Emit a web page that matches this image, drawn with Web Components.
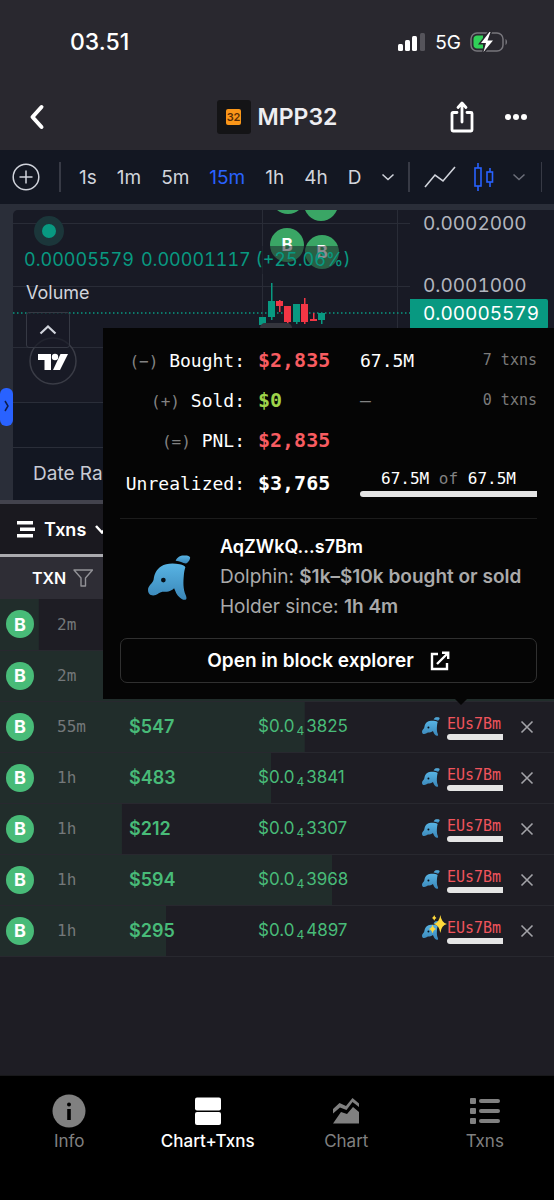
<!DOCTYPE html>
<html lang="en">
<head>
<meta charset="UTF-8">
<meta name="viewport" content="width=device-width, initial-scale=1">
<title>MPP32</title>
<style>
  :root {
    --bg: rgb(30, 29, 36);
    --panel: rgb(19, 23, 34);
    --frame: rgb(42, 46, 57);
    --green: rgb(72, 187, 120);
    --teal: rgb(8, 153, 129);
    --red: rgb(242, 54, 69);
    --blue: rgb(41, 98, 255);
    --mono: "DejaVu Sans Mono", monospace;
  }
  body {
    margin: 0;
    background: var(--bg);
    color: white;
    font-family: Inter, "Liberation Sans", sans-serif;
  }
</style>
</head>
<body>
<app-screen>
  <status-bar></status-bar>
  <token-header>MPP32</token-header>
  <chart-toolbar></chart-toolbar>
  <price-chart></price-chart>
  <txn-list></txn-list>
  <wallet-popover slot="overlay">AqZWkQ...s7Bm</wallet-popover>
  <tab-bar slot="footer"></tab-bar>
</app-screen>

<script>
const dolphin = (width, height) => `
  <svg width="${width}" height="${height}" viewBox="0 0 42 44" role="img" aria-label="Dolphin">
    <defs>
      <linearGradient id="skin" x1="0" y1="0" x2="0" y2="1">
        <stop offset="0" stop-color="#58b4e4"/>
        <stop offset="1" stop-color="#3a86b8"/>
      </linearGradient>
    </defs>
    <path fill="url(#skin)" d="M36.500 12C36 10.500 34 9.500 31 9C23 7.800 17 8.500 13 11C8 14 6 19 5.500 24C4.500 28 0 30 0 34C0 38 2 39.500 5 39.500C9 39.500 10 37 14 36C18 36 22 36 25.500 32.500C27 36 28 39 30.500 41C32 42.500 34 44 36.500 43.800C38 43.500 37.800 41.500 37 39.500C34 33 34.500 26 35 20C35.200 17 35.800 14 36.500 12Z"/>
    <path fill="url(#skin)" d="M27 5.500C29 2 31 .5 35 .5C38 .3 41 .8 41.200 2.500C41 5 39 8 37 8.300C34 7.500 31 6 27 5.500Z"/>
    <circle cx="15" cy="24.500" r="2.300" fill="#071019"/>
  </svg>`;

class AppScreen extends HTMLElement {
  connectedCallback() {
    this.attachShadow({ mode: 'open' });
    this.shadowRoot.innerHTML = `
      <style>
        :host {
          display: flex;
          flex-direction: column;
          min-height: 100vh;
          position: relative;
        }
        main {
          flex: 1;
        }
      </style>
      <main><slot></slot></main>
      <slot name="overlay"></slot>
      <slot name="footer"></slot>
    `;
  }
}
customElements.define('app-screen', AppScreen);

class StatusBar extends HTMLElement {
  connectedCallback() {
    this.attachShadow({ mode: 'open' });
    this.shadowRoot.innerHTML = `
      <style>
        :host {
          display: flex;
          align-items: center;
          justify-content: space-between;
          height: 84px;
          padding: 0 46px 0 70px;
          background: rgb(41, 40, 47);
        }
        .time {
          font-size: 23px;
          font-weight: 500;
        }
        .signals {
          display: flex;
          align-items: center;
          gap: 9px;
          font-size: 19px;
          font-weight: 400;
        }
        svg {
          display: block;
        }
      </style>
      <span class="time">03.51</span>
      <div class="signals">
        <svg width="28" height="18" viewBox="0 0 28 18" fill="white">
          <rect x="0" y="11" width="5" height="7" rx="1.5"/>
          <rect x="7" y="7" width="5" height="11" rx="1.5"/>
          <rect x="14" y="3" width="5" height="15" rx="1.5"/>
          <rect x="22" y="0" width="5" height="18" rx="1.5" fill="#55545b"/>
        </svg>
        <span>5G</span>
        <svg width="38" height="20" viewBox="0 0 38 20">
          <rect x="1" y="1" width="32" height="18" rx="6" fill="none" stroke="#77767c" stroke-width="1.5"/>
          <path d="M35.500 7C37.500 8 37.500 12 35.500 13Z" fill="#77767c"/>
          <path d="M7 3.500H13V16.500H7C5 16.500 3.500 15 3.500 13V7C3.500 5 5 3.500 7 3.500Z" fill="#30d158"/>
          <path d="M19.500 0L11 11H16L13.500 20L23 8.500H17.500L20.500 0Z" fill="white" stroke="#29282f" stroke-width="3" paint-order="stroke"/>
        </svg>
      </div>
    `;
  }
}
customElements.define('status-bar', StatusBar);

class TokenHeader extends HTMLElement {
  connectedCallback() {
    this.attachShadow({ mode: 'open' });
    this.shadowRoot.innerHTML = `
      <style>
        :host {
          display: grid;
          grid-template-columns: 1fr auto 1fr;
          align-items: center;
          height: 66px;
          padding: 0 26px;
          background: rgb(41, 40, 47);
        }
        button {
          display: flex;
          padding: 0;
          border: 0;
          background: none;
          color: white;
        }
        h1 {
          display: flex;
          align-items: center;
          gap: 7px;
          margin: 0;
          font-size: 23px;
          font-weight: 600;
          color: rgb(238, 238, 242);
        }
        .logo {
          display: grid;
          place-items: center;
          width: 34px;
          height: 34px;
          border-radius: 3px;
          background: rgb(20, 20, 22);
        }
        .logo span {
          padding: 0 1px;
          border-radius: 2px;
          background: rgb(250, 150, 25);
          color: rgb(90, 45, 5);
          font-size: 11px;
          line-height: 16px;
        }
        .actions {
          display: flex;
          align-items: center;
          justify-content: flex-end;
          gap: 29px;
        }
      </style>
      <button aria-label="Back">
        <svg width="22" height="26" viewBox="0 0 22 26" fill="none" stroke="white" stroke-width="4" stroke-linecap="round" stroke-linejoin="round"><path d="M14 3L5 13L14 23" transform="translate(1.500)"/></svg>
      </button>
      <h1><span class="logo"><span>32</span></span><slot></slot></h1>
      <div class="actions">
        <button aria-label="Share">
          <svg width="26" height="34" viewBox="0 0 26 34" fill="none" stroke="white" stroke-width="2.800" stroke-linecap="round" stroke-linejoin="round">
            <path d="M8 12.500H4Q3 12.500 3 13.500V30Q3 31 4 31H22Q23 31 23 30V13.500Q23 12.500 22 12.500H18"/>
            <path d="M13 22V4M9 7.500L13 3L17 7.500"/>
          </svg>
        </button>
        <button aria-label="More">
          <svg width="24" height="8" viewBox="0 0 24 8" fill="white"><circle cx="4" cy="4" r="3"/><circle cx="12" cy="4" r="3"/><circle cx="20" cy="4" r="3"/></svg>
        </button>
      </div>
    `;
  }
}
customElements.define('token-header', TokenHeader);

class ChartToolbar extends HTMLElement {
  connectedCallback() {
    const intervals = ['1s', '1m', '5m', '15m', '1h', '4h', 'D'];
    this.attachShadow({ mode: 'open' });
    this.shadowRoot.innerHTML = `
      <style>
        :host {
          display: flex;
          align-items: center;
          height: 54px;
          padding: 0 12px;
          background: var(--panel);
          border-bottom: 6px solid var(--frame);
          box-sizing: content-box;
        }
        button {
          display: flex;
          padding: 0;
          border: 0;
          background: none;
          color: rgb(209, 212, 220);
          font: 400 19px Inter, sans-serif;
        }
        button.active {
          color: var(--blue);
        }
        .intervals {
          display: flex;
          align-items: center;
          gap: 20px;
          padding: 0 13px 0 18px;
        }
        .styles {
          display: flex;
          align-items: center;
          flex: 1;
          gap: 18px;
          padding: 0 14px;
        }
        i {
          width: 2px;
          height: 30px;
          background: rgb(55, 58, 69);
        }
        .add {
          margin-right: 19px;
        }
        .end {
          width: 1px;
        }
      </style>
      <button class="add" aria-label="Indicators">
        <svg width="28" height="28" viewBox="0 0 28 28" fill="none" stroke="#d1d4dc" stroke-width="1.500"><circle cx="14" cy="14" r="12.800"/><path d="M14 7.500V20.500M7.500 14H20.500"/></svg>
      </button>
      <i></i>
      <div class="intervals">
        ${intervals.map(t => `<button${t === '15m' ? ' class="active"' : ''}>${t}</button>`).join('')}
        <button aria-label="More intervals">
          <svg width="14" height="8" viewBox="0 0 14 8" fill="none" stroke="#d1d4dc" stroke-width="1.500"><path d="M1.500 1.500L7 6.500L12.500 1.500"/></svg>
        </button>
      </div>
      <i></i>
      <div class="styles">
        <button aria-label="Line">
          <svg width="32" height="24" viewBox="0 0 32 24" fill="none" stroke="#d1d4dc" stroke-width="1.600"><path d="M1 22L11 10L19 16L31 2"/></svg>
        </button>
        <button aria-label="Candles">
          <svg width="20" height="28" viewBox="0 0 20 28" fill="none" stroke="#2962ff" stroke-width="1.600"><rect x="1" y="5" width="6" height="18"/><path d="M4 0V5M4 23V28"/><rect x="13" y="9" width="5.500" height="10"/><path d="M16 5V9M16 19V24"/></svg>
        </button>
        <button aria-label="More styles">
          <svg width="14" height="8" viewBox="0 0 14 8" fill="none" stroke="#6c6f7a" stroke-width="1.500"><path d="M1.500 1.500L7 6.500L12.500 1.500"/></svg>
        </button>
      </div>
      <i class="end"></i>
    `;
  }
}
customElements.define('chart-toolbar', ChartToolbar);

class PriceChart extends HTMLElement {
  connectedCallback() {
    // x, top, height, wick top, wick bottom, up
    const candles = [
      [246, 107, 8, 107, 115, 1],
      [255, 91, 16, 73, 110, 1],
      [263, 91, 5, 90, 102, 0],
      [271, 96, 16, 96, 114, 0],
      [280, 94, 18, 94, 114, 1],
      [288, 94, 18, 88, 114, 0],
      [297, 109, 2, 103, 111, 0],
      [305, 103, 7, 103, 114, 1]
    ];
    // the first two are scrolled out at the top, only their lower edge shows
    const buys = [[275, -13], [308, -6], [274, 35, 'B'], [309, 42, 'B']];
    this.attachShadow({ mode: 'open' });
    this.shadowRoot.innerHTML = `
      <style>
        :host {
          display: flex;
          background: var(--frame);
          border-bottom: 4px solid rgb(67, 67, 77);
          font-variant-numeric: tabular-nums;
        }
        .rail {
          display: flex;
          align-items: center;
          width: 13px;
          padding-top: 104px;
        }
        .rail button {
          width: 13px;
          height: 38px;
          padding: 0;
          border: 0;
          border-radius: 6px;
          background: var(--blue);
        }
        .chart {
          flex: 1;
          min-width: 0;
          background: rgb(24, 26, 37);
          border-top-left-radius: 5px;
          overflow: hidden;
        }
        .plot {
          display: grid;
          grid-template-columns: 1fr 144px;
          height: 192px;
        }
        .pane {
          position: relative;
          overflow: hidden;
        }
        .grid {
          position: absolute;
          inset: 0;
        }
        .brand {
          position: absolute;
          left: 16px;
          top: 127px;
        }
        .legend {
          position: relative;
          display: flex;
          flex-direction: column;
          align-items: flex-start;
          padding: 6px 0 0 11px;
        }
        .live {
          width: 14px;
          height: 14px;
          margin-left: 10px;
          border: 8px solid rgb(27, 54, 58);
          border-radius: 50%;
          background: var(--teal);
        }
        .values {
          display: flex;
          gap: 7px;
          color: var(--teal);
          background: rgba(24, 26, 37, 0.5);
          font-size: 18px;
          line-height: 28px;
          white-space: nowrap;
        }
        .volume {
          color: rgb(209, 212, 220);
          font-size: 18px;
          line-height: 38px;
          padding-left: 2px;
        }
        .collapse {
          display: grid;
          place-items: center;
          width: 44px;
          height: 36px;
          margin-left: 2px;
          background: rgba(24, 26, 37, 0.7);
          border: 1px solid rgb(54, 57, 68);
          border-radius: 3px;
        }
        .axis {
          display: flex;
          flex-direction: column;
          align-items: flex-start;
          color: rgb(178, 181, 190);
          font-size: 19px;
        }
        .axis span {
          padding-left: 13px;
          line-height: 27px;
        }
        .axis span + span {
          margin-top: 35px;
        }
        .axis .last {
          margin-top: 0;
          padding-right: 9px;
          line-height: 30px;
          color: white;
          background: var(--teal);
          border-radius: 0 2px 2px 0;
        }
        .times {
          height: 44px;
          background: var(--panel);
          border-top: 1px solid var(--frame);
        }
        .range {
          padding: 0 20px;
          background: var(--panel);
          border-top: 1px solid var(--frame);
        }
        .range button {
          display: block;
          padding: 2px 0;
          border: 0;
          background: none;
          color: rgb(200, 203, 212);
          font: 400 19px/48px Inter, sans-serif;
        }
      </style>
      <div class="rail">
        <button aria-label="Show drawing tools">
          <svg width="5" height="12" viewBox="0 0 5 12" fill="none" stroke="#0d1d4d" stroke-width="1.500"><path d="M1 1L4 6L1 11"/></svg>
        </button>
      </div>
      <div class="chart">
        <div class="plot">
          <div class="pane">
            <svg class="grid" width="100%" height="100%">
              <g stroke="#292c37">
                <line x1="0" x2="100%" y1="13.500" y2="13.500"/>
                <line x1="0" x2="100%" y1="76.500" y2="76.500"/>
                <line x1="0" x2="100%" y1="137.500" y2="137.500"/>
                <line x1="249.500" x2="249.500" y1="0" y2="100%"/>
                <line x1="384.500" x2="384.500" y1="0" y2="100%"/>
              </g>
              <line x1="0" x2="100%" y1="103" y2="103" stroke="#089981" stroke-width="1.500" stroke-dasharray="1.500 2.500"/>
              ${candles.map(([x, y, h, top, bottom, up]) => `
                <g fill="${up ? '#089981' : '#f23645'}">
                  <rect x="${x}" y="${y}" width="7" height="${h}"/>
                  <rect x="${x + 3}" y="${top}" width="1.500" height="${bottom - top}"/>
                </g>`).join('')}
              <rect x="247" y="113" width="32" height="20" rx="5" fill="#34353d"/>
              ${buys.map(([x, y, label]) => `
                <circle cx="${x}" cy="${y}" r="17" fill="#3aa665"/>
                ${label ? `<text x="${x}" y="${y + 6}" fill="white" font-size="17" font-weight="700" text-anchor="middle">${label}</text>` : ''}`).join('')}
            </svg>
            <svg class="brand" width="48" height="48" viewBox="0 0 48 48" role="img" aria-label="TradingView">
              <circle cx="24" cy="24" r="23" fill="#181a25" stroke="#3a3c46" stroke-width="1.500"/>
              <path fill="white" d="M9 17H22V33H15.500V23H9ZM31 33H24L31.500 17H39Z"/>
              <circle cx="26" cy="20" r="3.200" fill="white"/>
            </svg>
            <div class="legend">
              <span class="live"></span>
              <div class="values"><span>0.00005579</span><span>0.00001117 (+25.06%)</span></div>
              <span class="volume">Volume</span>
              <button class="collapse" aria-label="Collapse legend">
                <svg width="18" height="10" viewBox="0 0 18 10" fill="none" stroke="#d1d4dc" stroke-width="2.200"><path d="M1.500 8.500L9 1.500L16.500 8.500"/></svg>
              </button>
            </div>
          </div>
          <div class="axis">
            <span>0.0002000</span>
            <span>0.0001000</span>
            <span class="last">0.00005579</span>
          </div>
        </div>
        <div class="times"></div>
        <div class="range"><button>Date Range</button></div>
      </div>
    `;
  }
}
customElements.define('price-chart', PriceChart);

class TxnList extends HTMLElement {
  connectedCallback() {
    // age, amount, price digits, bar percent, fresh wallet
    const rows = [
      ['2m', '', '', 7],
      ['2m', '', '', 100],
      ['55m', '$547', '3825', 55],
      ['1h', '$483', '3841', 49],
      ['1h', '$212', '3307', 22],
      ['1h', '$594', '3968', 60],
      ['1h', '$295', '4897', 30, true]
    ];
    const sparkle = `
      <svg class="sparkle" width="20" height="20" viewBox="0 0 18 18" fill="#ffd93b">
        <path d="M12 1Q13 8 18 9Q13 10 12 17Q11 10 6 9Q11 8 12 1Z"/>
        <path d="M5 9.500Q5.700 13 8.500 13.500Q5.700 14 5 17.500Q4.300 14 1.500 13.500Q4.300 13 5 9.500Z"/>
        <path d="M6.500 1Q7 3 8.500 3.500Q7 4 6.500 6Q6 4 4.500 3.500Q6 3 6.500 1Z"/>
      </svg>`;
    this.attachShadow({ mode: 'open' });
    this.shadowRoot.innerHTML = `
      <style>
        :host {
          display: block;
        }
        .view {
          display: flex;
          align-items: center;
          height: 50px;
          padding: 0 17px;
          background: rgb(26, 25, 31);
          border-bottom: 3px solid rgb(170, 170, 174);
        }
        .view button {
          display: flex;
          align-items: center;
          gap: 9px;
          padding: 0;
          border: 0;
          background: none;
          color: white;
          font: 600 18px Inter, sans-serif;
        }
        table {
          width: 100%;
          border-collapse: collapse;
          table-layout: fixed;
        }
        thead tr {
          height: 42px;
          background: rgb(46, 45, 53);
        }
        th {
          padding: 0 0 0 32px;
          text-align: left;
          font-size: 16px;
          font-weight: 600;
        }
        th div {
          display: flex;
          align-items: center;
          gap: 7px;
        }
        tbody tr {
          height: 51px;
          background: linear-gradient(rgb(33, 45, 43), rgb(33, 45, 43)) no-repeat left / var(--size) 100%;
        }
        td {
          padding: 0;
          border-bottom: 1px solid rgb(40, 40, 47);
          white-space: nowrap;
        }
        .badge {
          display: grid;
          place-items: center;
          width: 28px;
          height: 28px;
          margin-left: 6px;
          border-radius: 50%;
          background: var(--green);
          font-size: 18px;
          font-weight: 700;
        }
        .age {
          color: rgb(116, 120, 122);
          font: 16px var(--mono);
        }
        .amount {
          color: var(--green);
          font-size: 18px;
          font-weight: 600;
        }
        .price {
          color: var(--green);
          font-size: 17px;
        }
        .price small {
          padding: 0 2px;
          font-size: 12px;
          vertical-align: -3px;
        }
        .maker {
          display: flex;
          align-items: center;
          justify-content: flex-end;
          gap: 7px;
        }
        .icon {
          position: relative;
          display: flex;
        }
        .sparkle {
          position: absolute;
          left: 5px;
          top: -7px;
        }
        a {
          min-width: 56px;
          color: rgb(240, 84, 92);
          font: 15px/20px var(--mono);
          text-decoration: none;
        }
        a::after {
          content: "";
          display: block;
          height: 6px;
          border-radius: 3px 0 0 3px;
          background: rgb(229, 229, 229);
        }
        td button {
          display: flex;
          margin-left: 17px;
          padding: 0;
          border: 0;
          background: none;
        }
      </style>
      <div class="view">
        <button>
          <svg width="18" height="17" viewBox="0 0 18 17" fill="white"><rect width="16" height="3.500"/><rect x="3" y="6.500" width="15" height="3.500"/><rect y="13" width="16" height="3.500"/></svg>
          Txns
          <svg width="14" height="9" viewBox="0 0 14 9" fill="none" stroke="white" stroke-width="2.500"><path d="M1 1L7 7.500L13 1"/></svg>
        </button>
      </div>
      <table>
        <colgroup>
          <col style="width:57px"><col style="width:72px"><col style="width:129px"><col><col style="width:120px"><col style="width:51px">
        </colgroup>
        <thead>
          <tr>
            <th colspan="6"><div>TXN
              <svg width="20" height="18" viewBox="0 0 20 18" fill="none" stroke="#929297" stroke-width="1.400" stroke-linejoin="round"><path d="M1 1H19.500L12.500 9V17H8V9Z"/></svg>
            </div></th>
          </tr>
        </thead>
        <tbody>
          ${rows.map(([age, amount, digits, size, fresh]) => `
          <tr style="--size:${size}%">
            <td><span class="badge">B</span></td>
            <td class="age">${age}</td>
            <td class="amount">${amount}</td>
            <td class="price">${digits ? `$0.0<small>4</small>${digits}` : ''}</td>
            <td>${digits ? `<div class="maker"><span class="icon">${dolphin(18, 19)}${fresh ? sparkle : ''}</span><a href="#maker">EUs7Bm</a></div>` : ''}</td>
            <td>${digits ? `<button aria-label="Hide"><svg width="14" height="14" viewBox="0 0 14 14" stroke="#a3a3a8" stroke-width="1.600"><path d="M1.500 1.500L12.500 12.500M12.500 1.500L1.500 12.500"/></svg></button>` : ''}</td>
          </tr>`).join('')}
        </tbody>
      </table>
    `;
  }
}
customElements.define('txn-list', TxnList);

class WalletPopover extends HTMLElement {
  connectedCallback() {
    this.attachShadow({ mode: 'open' });
    this.shadowRoot.innerHTML = `
      <style>
        :host {
          display: block;
          position: absolute;
          top: 328px;
          left: 103px;
          right: 0;
          padding: 12px 17px 16px;
          background: rgb(5, 5, 5);
        }
        :host::after {
          content: "";
          position: absolute;
          right: 87px;
          bottom: -6px;
          border: 6px solid transparent;
          border-bottom-width: 0;
          border-top-color: rgb(5, 5, 5);
        }
        table {
          width: 100%;
          border-collapse: collapse;
          font: 18px var(--mono);
        }
        tr {
          height: 40px;
        }
        tr:last-child {
          height: 46px;
        }
        th, td {
          padding: 0;
          text-align: left;
          font-weight: 400;
          white-space: nowrap;
        }
        th {
          width: 125px;
          padding-right: 13px;
          text-align: right;
        }
        .usd {
          width: 102px;
          font-size: 20px;
          font-weight: 700;
        }
        .loss {
          color: rgb(248, 92, 97);
        }
        .gain {
          color: rgb(158, 212, 74);
        }
        .dim {
          color: rgb(130, 130, 130);
        }
        .sign {
          font-size: 16px;
        }
        .count {
          color: rgb(122, 122, 122);
          font-size: 15px;
          text-align: right;
        }
        .held {
          font-size: 16px;
          text-align: center;
        }
        .held::after {
          content: "";
          display: block;
          height: 6px;
          margin-top: 3px;
          border-radius: 3px 0 0 3px;
          background: rgb(229, 229, 229);
        }
        .wallet {
          display: flex;
          align-items: center;
          gap: 29px;
          margin: 12px 0 16px;
          padding: 13px 0 0 28px;
          border-top: 1px solid rgb(28, 28, 28);
          color: rgb(170, 170, 170);
          font-size: 18px;
          line-height: 30px;
        }
        .wallet > div {
          white-space: nowrap;
        }
        h2 {
          margin: 0;
          color: white;
          font: inherit;
          font-weight: 600;
        }
        p {
          margin: 0;
          font-size: 19px;
        }
        b {
          font-weight: 600;
        }
        a {
          display: flex;
          align-items: center;
          justify-content: center;
          gap: 16px;
          height: 43px;
          border: 1px solid rgb(48, 48, 48);
          border-radius: 7px;
          color: white;
          font-size: 19px;
          font-weight: 600;
          text-decoration: none;
        }
      </style>
      <table>
        <tr><th><span class="dim sign">(−)</span> Bought:</th><td class="usd loss">$2,835</td><td>67.5M</td><td class="count">7 txns</td></tr>
        <tr><th><span class="dim sign">(+)</span> Sold:</th><td class="usd gain">$0</td><td class="dim">–</td><td class="count">0 txns</td></tr>
        <tr><th><span class="dim sign">(=)</span> PNL:</th><td class="usd loss">$2,835</td><td></td><td></td></tr>
        <tr><th>Unrealized:</th><td class="usd">$3,765</td><td class="held" colspan="2">67.5M <span class="dim">of</span> 67.5M</td></tr>
      </table>
      <div class="wallet">
        ${dolphin(43, 45)}
        <div>
          <h2><slot></slot></h2>
          <p>Dolphin: <b>$1k–$10k bought or sold</b></p>
          <p>Holder since: <b>1h 4m</b></p>
        </div>
      </div>
      <a href="#explorer">Open in block explorer
        <svg width="20" height="20" viewBox="0 0 20 20" fill="none" stroke="white" stroke-width="2.400"><path d="M8 3H2V18H17V12M12 1.800H18.200V8M18 2L7 13"/></svg>
      </a>
    `;
  }
}
customElements.define('wallet-popover', WalletPopover);

class TabBar extends HTMLElement {
  connectedCallback() {
    const tabs = [
      ['Info', '<circle cx="17" cy="17" r="16.500"/><circle cx="17" cy="10.500" r="2" fill="black"/><path fill="black" d="M15.200 15H18.800V26H15.200Z"/>'],
      ['Chart+Txns', '<rect x="4" y="3.500" width="26" height="13" rx="2"/><rect x="4" y="18" width="26" height="13" rx="2"/>'],
      ['Chart', '<path d="M4 15L10.500 9L17 12L23.500 4L30 9.500V13L23.500 8L17.500 16L11 13.500L4 19.500Z"/><path d="M4 29.500L12 18L18 20L24 13L30 18V29.500Z"/>'],
      ['Txns', '<rect x="2" y="4" width="6" height="6" rx="1"/><rect x="2" y="14" width="6" height="6" rx="1"/><rect x="2" y="24" width="6" height="6" rx="1"/><rect x="11" y="5" width="21" height="4" rx="2"/><rect x="11" y="15" width="21" height="4" rx="2"/><rect x="11" y="25" width="21" height="4" rx="2"/>']
    ];
    this.attachShadow({ mode: 'open' });
    this.shadowRoot.innerHTML = `
      <style>
        :host {
          display: block;
          background: black;
          border-top: 1px solid rgb(24, 24, 26);
        }
        nav {
          display: grid;
          grid-template-columns: repeat(4, 1fr);
          padding: 18px 0 48px;
        }
        a {
          display: flex;
          flex-direction: column;
          align-items: center;
          gap: 2px;
          color: rgb(128, 128, 128);
          font-size: 17px;
          font-weight: 400;
          line-height: 22px;
          text-decoration: none;
        }
        a.active {
          color: white;
          font-weight: 500;
        }
      </style>
      <nav>
        ${tabs.map(([name, icon], i) => `
        <a href="#tab"${i === 1 ? ' class="active" aria-current="page"' : ''}>
          <svg width="34" height="34" viewBox="0 0 34 34" fill="currentColor">${icon}</svg>
          ${name}
        </a>`).join('')}
      </nav>
    `;
  }
}
customElements.define('tab-bar', TabBar);
</script>
</body>
</html>
